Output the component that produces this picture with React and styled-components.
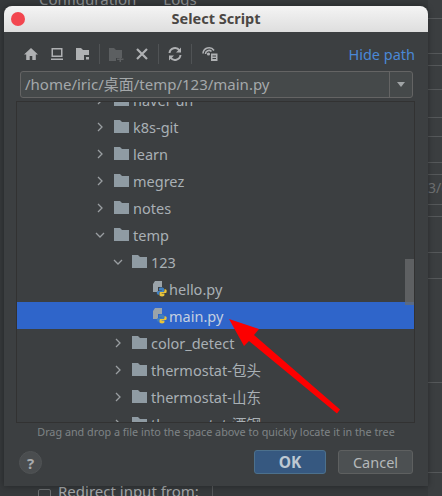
import React from 'react';
import styled, { createGlobalStyle } from 'styled-components';

const treeRows = [
  { name: 'haver un', depth: 1, kind: 'closed' },
  { name: 'k8s-git', depth: 1, kind: 'closed' },
  { name: 'learn', depth: 1, kind: 'closed' },
  { name: 'megrez', depth: 1, kind: 'closed' },
  { name: 'notes', depth: 1, kind: 'closed' },
  { name: 'temp', depth: 1, kind: 'open' },
  { name: '123', depth: 2, kind: 'open' },
  { name: 'hello.py', depth: 3, kind: 'file' },
  { name: 'main.py', depth: 3, kind: 'file', selected: true },
  { name: 'color_detect', depth: 2, kind: 'closed' },
  { name: 'thermostat-包头', depth: 2, kind: 'closed' },
  { name: 'thermostat-山东', depth: 2, kind: 'closed' },
  { name: 'thermostat-酒钢', depth: 2, kind: 'closed' },
];

const sideRows = [19, 35, 12, 24, 28, 19, 26, 12, 30, 12, 36, 26, 104, 90];

const GlobalStyle = createGlobalStyle`
  html, body {
    margin: 0;
    padding: 0;
    background: #313335;
  }
  body {
    font-family: "Noto Sans", "Noto Sans CJK SC", sans-serif;
  }
`;

const Desktop = styled.div`
  position: relative;
  width: 442px;
  height: 496px;
  overflow: hidden;
  background: #36393b;
  display: flex;
  flex-direction: column;
  justify-content: space-between;
`;

const BehindTabs = styled.div`
  display: flex;
  gap: 27px;
  height: 8px;
  padding-left: 39px;
  font-size: 15px;
  line-height: 8px;
  color: #8b8f91;
  overflow: hidden;
  span {
    margin-top: -5px;
  }
`;

const BehindForm = styled.div`
  display: flex;
  align-items: center;
  gap: 7px;
  height: 10px;
  padding-left: 38px;
  font-size: 15px;
  color: #a2a5a7;
  overflow: hidden;
  span {
    width: 154px;
    border-right: 1px solid #55585a;
    white-space: nowrap;
  }
`;

const BehindCheck = styled.i`
  width: 13px;
  height: 13px;
  flex: none;
  margin-top: 8px;
  box-sizing: border-box;
  border: 1px solid #6b6e70;
  border-radius: 2px;
`;

const SideStrip = styled.div`
  position: absolute;
  top: 0;
  right: 0;
  width: 14px;
  height: 496px;
  display: flex;
  flex-direction: column;
  background: #3b3e40;
`;

const SideRow = styled.div`
  flex: none;
  box-sizing: border-box;
  border-bottom: 1px solid #55585a;
  font-size: 14px;
  line-height: 26px;
  color: #6d7072;
  white-space: nowrap;
`;

const Dialog = styled.div`
  position: absolute;
  left: 4px;
  top: 6px;
  width: 424px;
  height: 480px;
  display: flex;
  flex-direction: column;
  background: #3c3f41;
  border-radius: 8px 8px 0 0;
  box-shadow: 0 0 6px rgba(0, 0, 0, 0.35);
`;

const TitleBar = styled.div`
  position: relative;
  height: 26px;
  flex: none;
  box-sizing: border-box;
  padding-bottom: 2px;
  display: flex;
  align-items: center;
  justify-content: center;
  background: linear-gradient(#f4f4f4, #dedede);
  border-radius: 8px 8px 0 0;
  font-size: 14.5px;
  font-weight: 700;
  color: #4b4744;
`;

const CloseDot = styled.span`
  position: absolute;
  left: 7px;
  top: 6px;
  width: 14px;
  height: 14px;
  border-radius: 50%;
  background: #f2464f;
`;

const Toolbar = styled.div`
  height: 39px;
  flex: none;
  display: flex;
  align-items: center;
  padding: 5px 13px 0 19px;
  box-sizing: border-box;
`;

const ToolIcon = styled.svg`
  width: ${(p) => p.$width || 16}px;
  height: 16px;
  margin-right: ${(p) => p.$gap || 0}px;
  flex: none;
`;

const ToolDivider = styled.i`
  width: 1px;
  height: 20px;
  margin-right: ${(p) => p.$gap || 0}px;
  background: #505355;
  flex: none;
`;

const HidePath = styled.a`
  margin-left: auto;
  font-size: 14.5px;
  color: #4a88d6;
`;

const PathField = styled.div`
  height: 27px;
  flex: none;
  margin: 0 15px 0 16px;
  box-sizing: border-box;
  display: flex;
  border: 1px solid #646464;
  border-radius: 3px;
  background: #45494a;
`;

const PathText = styled.div`
  flex: 1;
  padding-left: 4px;
  font-size: 15px;
  line-height: 25px;
  color: #a4a8aa;
  white-space: nowrap;
`;

const PathArrow = styled.div`
  width: 22px;
  display: flex;
  align-items: center;
  justify-content: center;
  border-left: 1px solid #646464;
  &::after {
    content: '';
    border-left: 4.5px solid transparent;
    border-right: 4.5px solid transparent;
    border-top: 5px solid #a0a4a6;
  }
`;

const Tree = styled.div`
  position: relative;
  flex: none;
  height: 322px;
  margin: 3px 13px 0 12px;
  box-sizing: border-box;
  border: 1px solid #323232;
  overflow: hidden;
`;

const TreeList = styled.div`
  margin-top: -16px;
`;

const Row = styled.div`
  height: 27px;
  display: flex;
  align-items: center;
  box-sizing: border-box;
  padding-left: ${(p) => 75 + (p.$depth - 1) * 18 + (p.$file ? 24 : 0)}px;
  background: ${(p) => (p.$selected ? '#2f65ca' : 'transparent')};
  color: ${(p) => (p.$selected ? '#c3cfe0' : '#a9b0b5')};
  font-size: 14.5px;
  white-space: nowrap;
`;

const Chevron = styled.svg`
  width: 16px;
  height: 16px;
  margin-right: 6px;
  flex: none;
`;

const FolderIcon = styled.svg`
  width: 15px;
  height: 13px;
  margin-right: 4px;
  flex: none;
`;

const FileIcon = styled.svg`
  width: 15px;
  height: 16px;
  margin-right: 2px;
  flex: none;
`;

const ScrollThumb = styled.div`
  position: absolute;
  right: 0;
  top: 157px;
  width: 9px;
  height: 46px;
  background: rgba(106, 108, 110, 0.75);
`;

const Hint = styled.div`
  height: 19px;
  flex: none;
  text-align: center;
  font-size: 10.8px;
  line-height: 18px;
  color: #7f8486;
`;

const Footer = styled.div`
  flex: 1;
  display: flex;
  align-items: flex-start;
  padding: 8px 15px 0 15px;
  gap: 12px;
`;

const HelpButton = styled.div`
  width: 23px;
  height: 23px;
  margin-top: 1px;
  margin-right: auto;
  box-sizing: border-box;
  border-radius: 50%;
  border: 1px solid #505355;
  background: #4a4d4f;
  display: flex;
  align-items: center;
  justify-content: center;
  font-size: 15px;
  font-weight: 700;
  color: #a8abad;
`;

const Button = styled.div`
  width: ${(p) => p.$width}px;
  height: 24px;
  box-sizing: border-box;
  display: flex;
  align-items: center;
  justify-content: center;
  border-radius: 3px;
  border: 1px solid ${(p) => (p.$primary ? '#4c708c' : '#5e6060')};
  background: ${(p) => (p.$primary ? '#365880' : '#4c5052')};
  font-size: ${(p) => (p.$primary ? 15.5 : 14.5)}px;
  font-weight: ${(p) => (p.$primary ? 700 : 400)};
  color: ${(p) => (p.$primary ? '#bdc8d2' : '#b4b8ba')};
`;

const ArrowOverlay = styled.svg`
  position: absolute;
  left: 0;
  top: 0;
  width: 442px;
  height: 496px;
  pointer-events: none;
`;

const Folder = () => (
  <FolderIcon viewBox="0 0 15 13">
    <path d="M0 0h6l2 2h7v11H0z" fill="#8f9ba3" />
  </FolderIcon>
);

const Arrow = ({ open }) => (
  <Chevron viewBox="0 0 16 16" fill="none" stroke="#9a9ea1" strokeWidth="1.3">
    {open ? <path d="M4 6l4 4 4-4" /> : <path d="M6 4l4 4-4 4" />}
  </Chevron>
);

const PythonFile = () => (
  <FileIcon viewBox="0 0 15 16">
    <path d="M3 0h7v6H6v5H1V3z" fill="#9aa3a9" />
    <g transform="translate(3 3) scale(0.8)">
      <path d="M8 4.500c-2 0-3 .6-3 1.700V8h3.500v.6H4C2.800 8.600 2.200 9.600 2.200 11s.7 2.300 1.800 2.300h1.200v-1.600c0-1 .8-1.700 1.800-1.700h2.800c1 0 1.600-.7 1.600-1.600V6.200c0-1-1-1.700-3.400-1.700z" fill="#3f7fc0" />
      <path d="M8.800 15.600c2 0 3-.6 3-1.700V12H8.300v-.6h4.500c1.200 0 1.800-1 1.800-2.400S13.900 6.700 12.800 6.700h-1v1.600c0 1-.8 1.700-1.800 1.700H7.200c-1 0-1.600.7-1.600 1.600v2.300c0 1 1 1.700 3.200 1.700z" fill="#e8c33a" />
    </g>
  </FileIcon>
);

const App = () => (
  <Desktop>
    <GlobalStyle />
    <BehindTabs>
      <span>Configuration</span>
      <span>Logs</span>
    </BehindTabs>
    <BehindForm>
      <BehindCheck />
      <span>Redirect input from:</span>
    </BehindForm>
    <SideStrip>
      {sideRows.map((h, i) => (
        <SideRow key={i} style={{ height: h }}>{i === 8 ? '3/e' : ''}</SideRow>
      ))}
    </SideStrip>
    <Dialog>
      <TitleBar>
        <CloseDot />
        Select Script
      </TitleBar>
      <Toolbar>
        <ToolIcon $gap={10} viewBox="0 0 16 16" fill="#afb1b3">
          <path d="M8 2L1 8.500h2.200V14h3.500v-4h2.600v4h3.500V8.500H15z" />
        </ToolIcon>
        <ToolIcon $gap={10} viewBox="0 0 16 16" fill="#afb1b3">
          <path d="M2.500 2h11v9h-11zM4 3.500v6h8v-6zM2 12.500h12V14H2z" fillRule="evenodd" />
        </ToolIcon>
        <ToolIcon $gap={8} viewBox="0 0 16 16">
          <path d="M1 2h5l2 2h6v10H1z" fill="#afb1b3" />
          <path d="M9 9h6v6H9z" fill="#3c3f41" />
          <path d="M11 11h3v2.500h-3z" fill="#afb1b3" />
        </ToolIcon>
        <ToolDivider $gap={8} />
        <ToolIcon $gap={10} viewBox="0 0 16 16">
          <path d="M1 2h5l2 2h6v8H8v3H1z" fill="#5c5f61" />
          <path d="M11.500 10v2.500H9v1.500h2.500v2H13v-2h2.500v-1.500H13V10z" fill="#5c5f61" />
        </ToolIcon>
        <ToolIcon $gap={8} viewBox="0 0 16 16" stroke="#afb1b3" strokeWidth="2.200" fill="none">
          <path d="M3 3l10 10M13 3L3 13" />
        </ToolIcon>
        <ToolDivider $gap={8} />
        <ToolIcon $gap={8} viewBox="0 0 16 16" fill="none" stroke="#afb1b3" strokeWidth="2">
          <path d="M2.500 7A5.500 5.500 0 0 1 12.500 4.500M13.500 9A5.500 5.500 0 0 1 3.500 11.500" />
          <path d="M14 1.500v5h-5zM2 14.500v-5h5z" fill="#afb1b3" stroke="none" />
        </ToolIcon>
        <ToolDivider $gap={9} />
        <ToolIcon $width={18} viewBox="0 0 16 16">
          <path d="M1 7.500a6 6 0 0 1 11-3M3.500 8a3.500 3.500 0 0 1 6-2.500" fill="none" stroke="#afb1b3" strokeWidth="1.600" />
          <circle cx="6.500" cy="8" r="1.600" fill="#afb1b3" />
          <path d="M9 7.500h6.500V15H9z" fill="#afb1b3" />
          <path d="M10.500 10h3.500M10.500 12.500h3.500" stroke="#3c3f41" />
        </ToolIcon>
        <HidePath>Hide path</HidePath>
      </Toolbar>
      <PathField>
        <PathText>/home/iric/桌面/temp/123/main.py</PathText>
        <PathArrow />
      </PathField>
      <Tree>
        <TreeList>
          {treeRows.map((row) => (
            <Row key={row.name} $depth={row.depth} $selected={row.selected} $file={row.kind === 'file'}>
              {row.kind === 'file' ? (
                <PythonFile />
              ) : (
                <>
                  <Arrow open={row.kind === 'open'} />
                  <Folder />
                </>
              )}
              {row.name}
            </Row>
          ))}
        </TreeList>
        <ScrollThumb />
      </Tree>
      <Hint>Drag and drop a file into the space above to quickly locate it in the tree</Hint>
      <Footer>
        <HelpButton>?</HelpButton>
        <Button $primary $width={72}>OK</Button>
        <Button $width={75}>Cancel</Button>
      </Footer>
    </Dialog>
    <ArrowOverlay viewBox="0 0 442 496">
      <path d="M229 319L259 329L254 335L340 409.500L337 413.500L249 341L244 346z" fill="#fd0000" />
    </ArrowOverlay>
  </Desktop>
);

export default App;
